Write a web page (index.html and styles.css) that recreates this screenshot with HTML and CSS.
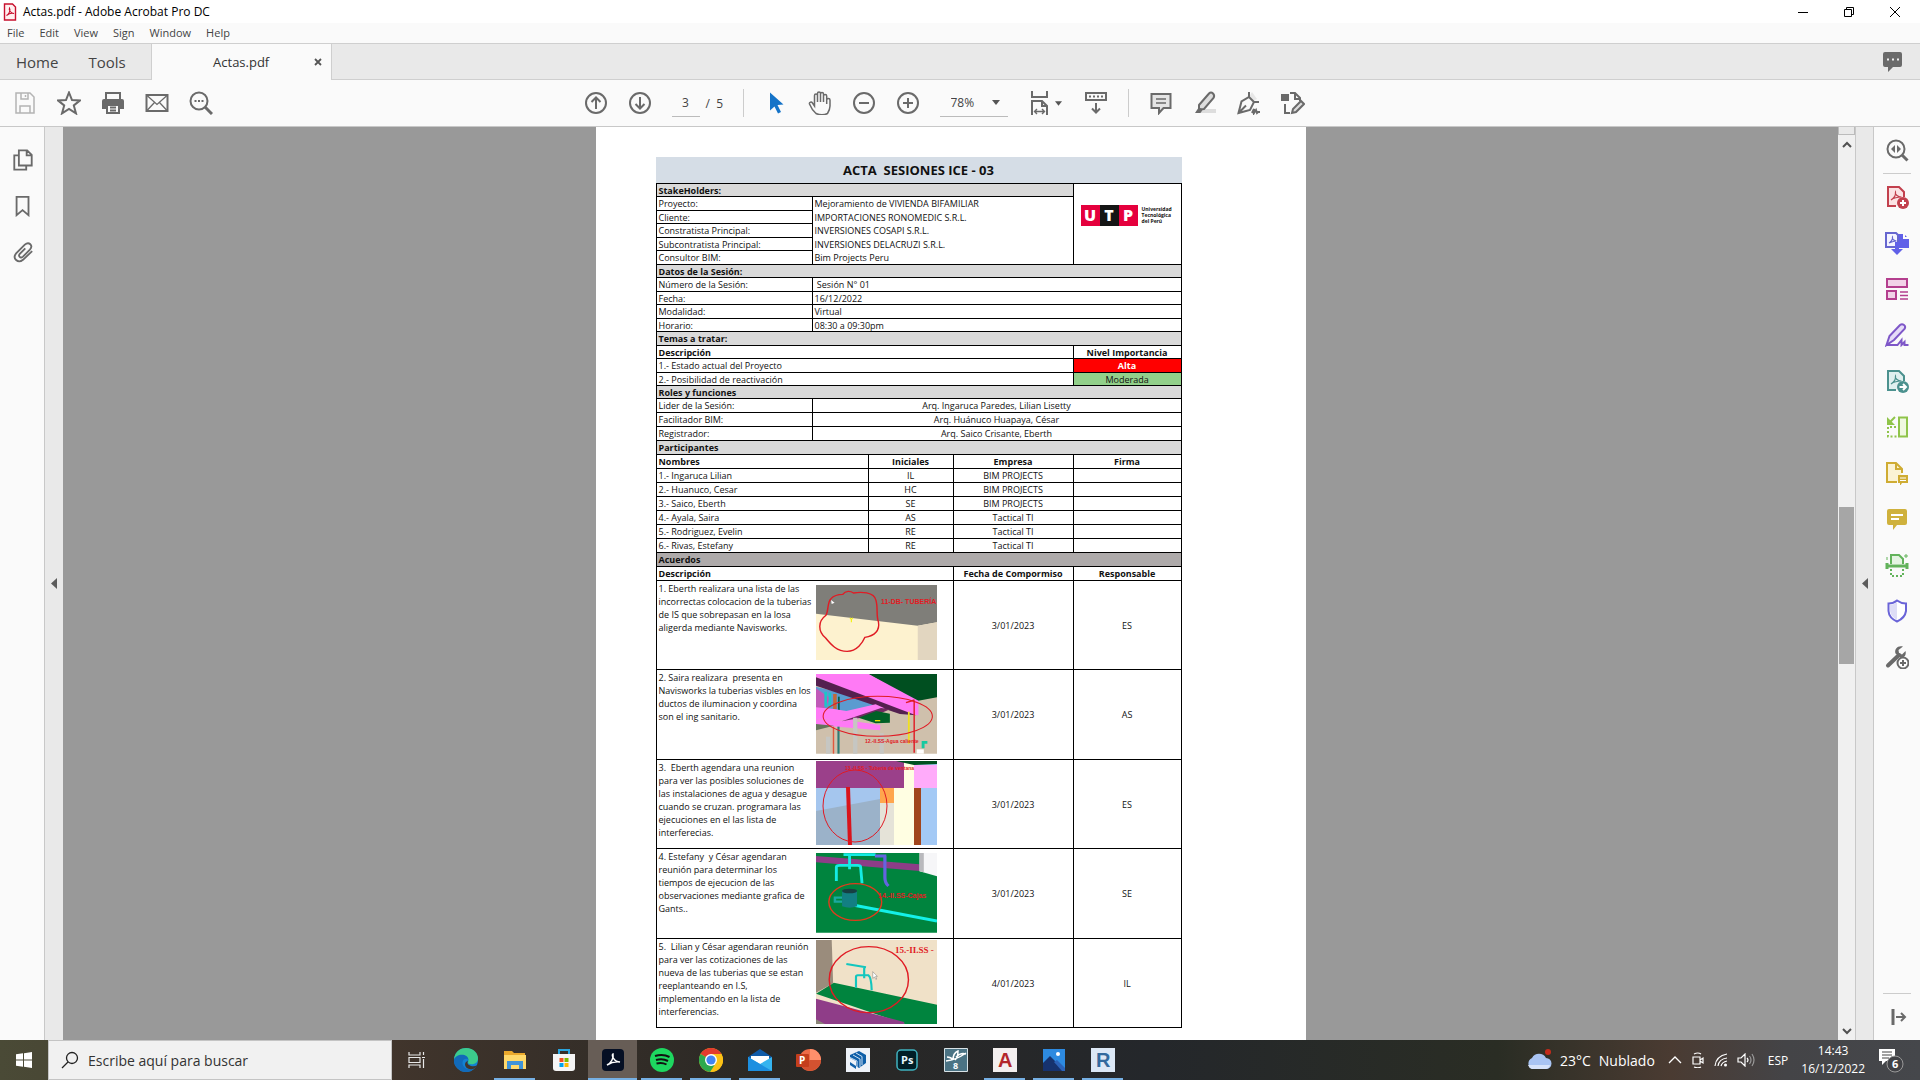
FILE: index.html
```html
<!DOCTYPE html>
<html lang="es">
<head>
    <meta charset="UTF-8">
    <meta name="viewport" content="width=device-width, initial-scale=1.0">
    <title>Actas.pdf - Adobe Acrobat Pro DC</title>
    <link rel="stylesheet" href="styles.css">
</head>
<body>
    <header class="titlebar">
        <svg class="app-icon" width="14" height="18" viewBox="0 0 14 18"><path d="M1.500 1h8l3 3v13h-11z" fill="#fff0f0" stroke="#c8102e" stroke-width="1.400"/><path d="M3.500 12.500c2-.8 4.500-5 3-7.500-1 2 1.500 5.500 4.500 5.500-2-.8-5.500.4-7.500 2z" fill="none" stroke="#c8102e" stroke-width="1.100"/></svg>
        <span class="window-title">Actas.pdf - Adobe Acrobat Pro DC</span>
        <div class="window-buttons">
            <button aria-label="Minimize"><svg width="12" height="12" viewBox="0 0 12 12"><path d="M1 6.500h10" stroke="#000"/></svg></button>
            <button aria-label="Restore"><svg width="12" height="12" viewBox="0 0 12 12"><path d="M1.500 3.500h7v7h-7zM3.500 3.500v-2h7v7h-2" fill="none" stroke="#000"/></svg></button>
            <button aria-label="Close"><svg width="12" height="12" viewBox="0 0 12 12"><path d="M1 1l10 10M11 1L1 11" stroke="#000"/></svg></button>
        </div>
    </header>

    <nav class="menubar">
        <button>File</button>
        <button>Edit</button>
        <button>View</button>
        <button>Sign</button>
        <button>Window</button>
        <button>Help</button>
    </nav>

    <div class="tabs">
        <button class="tab-link">Home</button>
        <button class="tab-link">Tools</button>
        <div class="tab">
            <span>Actas.pdf</span>
            <button class="tab-close" aria-label="Close tab"><svg width="8" height="8" viewBox="0 0 8 8"><path d="M1 1l6 6M7 1L1 7" stroke="#555" stroke-width="1.800"/></svg></button>
        </div>
        <button class="chat" aria-label="Notifications"><svg width="22" height="22" viewBox="0 0 22 22"><path d="M3 1h15q2 0 2 2v11q0 2-2 2h-7l-5 5v-5H3q-2 0-2-2V3q0-2 2-2z" fill="#6a6a6a"/><path d="M5 8.500h2M10 8.500h2M15 8.500h2" stroke="#eee" stroke-width="2"/></svg></button>
    </div>

    <div class="toolbar">
        <div class="tools-left">
            <button aria-label="Save"><svg class="icon faded" viewBox="0 0 24 24"><path d="M3 2h14l4 4v16H3zM8 2v6h7V2M7 22v-7h10v7"/><path d="M12.500 4v2"/></svg></button>
            <button aria-label="Star"><svg class="icon" viewBox="0 0 24 24"><path d="M12 1.500l3 7.500 8 .4-6.200 5 2.200 8-7-4.500-7 4.500 2.200-8L1 9.400 9 9z"/></svg></button>
            <button aria-label="Print"><svg class="icon" viewBox="0 0 24 24"><path d="M5 8V2h14v6"/><path d="M3 8h18q2 0 2 2v8h-4v-4H5v4H1v-8q0-2 2-2z" fill="#6a6a6a" stroke="none"/><path d="M6 14h12v8H6zM9 16.500h6M9 19.500h6"/></svg></button>
            <button aria-label="Mail"><svg class="icon" viewBox="0 0 24 24"><path d="M1.500 4h21v16h-21z"/><path d="M2 4.500l10 9 10-9M2 19.500l7.500-8M22 19.500l-7.500-8" stroke-width="1.300"/></svg></button>
            <button aria-label="Find"><svg class="icon" viewBox="0 0 24 24"><circle cx="10" cy="10" r="8.500"/><path d="M16 16l7 7" stroke-width="3"/><path d="M5.500 10h2M9 10h2M12.500 10h2"/></svg></button>
        </div>
        <div class="tools-center">
            <button aria-label="Previous page"><svg class="icon" viewBox="0 0 24 24"><circle cx="12" cy="12" r="10"/><path d="M12 18V7M7.500 11L12 6.500l4.500 4.500"/></svg></button>
            <button aria-label="Next page"><svg class="icon" viewBox="0 0 24 24"><circle cx="12" cy="12" r="10"/><path d="M12 6v11M7.500 13l4.500 4.500 4.500-4.500"/></svg></button>
            <div class="page-nav"><input type="text" value="3" aria-label="Page"><span>/&nbsp; 5</span></div>
            <i class="divider"></i>
            <button aria-label="Select"><svg class="icon" viewBox="0 0 24 24"><path d="M6 1.500v18l4.500-4 3.500 7 3-1.500-3.500-7 6-.5z" fill="#1473c8" stroke="none"/></svg></button>
            <button aria-label="Hand"><svg class="icon thin" viewBox="0 0 24 24"><path d="M8 22.500C4 19 2.500 15.500 1.500 13c-.5-2 2-2.500 3-1l2 3V4.500c0-2 3-2 3 0V11 2.500c0-2 3-2 3 0V11 3c0-2 3-2 3 0v8-6c0-2 3.200-2 3.200 0v-0 8-4c0-2 3.300-2 3.300 0v6c0 3-1 5-2.500 7.500-3 1.500-8 1.500-11.500 0z"/></svg></button>
            <button aria-label="Zoom out"><svg class="icon" viewBox="0 0 24 24"><circle cx="12" cy="12" r="10"/><path d="M7 12h10"/></svg></button>
            <button aria-label="Zoom in"><svg class="icon" viewBox="0 0 24 24"><circle cx="12" cy="12" r="10"/><path d="M7 12h10M12 7v10"/></svg></button>
            <div class="zoom-box"><select aria-label="Zoom"><option>78%</option></select><svg width="8" height="5" viewBox="0 0 8 5"><path d="M0 0h8L4 5z" fill="#555"/></svg></div>
            <button class="with-caret" aria-label="Fit width"><svg class="icon" viewBox="0 0 24 24"><path d="M4 0v6h15V0M4 24V10h10l5 5v9M14 10v5h5"/><path d="M7 20.500h9M9 18l-2.500 2.500L9 23M14 18l2.500 2.500L14 23" stroke-width="1.400"/></svg><svg width="7" height="5" viewBox="0 0 8 5"><path d="M0 0h8L4 5z" fill="#555"/></svg></button>
            <button aria-label="Scroll mode"><svg class="icon" viewBox="0 0 24 24"><path d="M2 2h20v7H2z"/><path d="M5 5.500h14" stroke-dasharray="2 2"/><path d="M12 12v9M8 17.500l4 4 4-4"/></svg></button>
            <i class="divider"></i>
            <button aria-label="Comment"><svg class="icon" viewBox="0 0 24 24"><path d="M2.500 3h19v14h-7L10 22v-5H2.500z" fill="#e4e4e4"/><path d="M7 8h10M7 12h10" stroke-width="1.400"/></svg></button>
            <button aria-label="Highlight"><svg class="icon" viewBox="0 0 24 24"><path d="M8 18h15v4H8z" fill="#ddd" stroke="none"/><path d="M6 14L16 2.500q2-2 4 0t.5 4.500L11 18l-5 .5z" fill="#ddd"/><path d="M6 16l3.500 3-2 3H2z" fill="#6a6a6a" stroke="none"/></svg></button>
            <button aria-label="Sign"><svg class="icon" viewBox="0 0 24 24"><path d="M12 6l3-5 5 7-4 2z" fill="#e7e7e7" stroke="none"/><path d="M1.500 22l3-11.500L12 6l5 5-4 8zM1.500 22L9 14.500M12 1v5M17 11h5"/><path d="M15 22l2-4v4l2-3 1 3 1-1h2"/></svg></button>
            <button aria-label="Edit"><svg class="icon" viewBox="0 0 24 24"><path d="M4 13v9h5M9 2h5l5 5v3M14 2v6h5"/><path d="M0 3h8v7H0z" fill="#6a6a6a" stroke="none"/><path d="M11 22l1-4 8-8 3 3-8 8z" fill="#ddd"/></svg></button>
        </div>
    </div>

    <main class="workspace">
        <aside class="side-left">
            <button aria-label="Pages"><svg class="icon" viewBox="0 0 24 24"><path d="M7.500 1.500h9l5 5V18h-14zM16 2v5h5M7 7H2.500v15.500h13V19"/></svg></button>
            <button aria-label="Bookmarks"><svg class="icon" viewBox="0 0 24 24"><path d="M5 2h13v20l-6.500-5.500L5 22z"/></svg></button>
            <button aria-label="Attachments"><svg class="icon" viewBox="0 0 24 24"><path d="M22 11L12 20.500c-5.500 4.500-12-1.500-7.500-7L14 4c4.500-4 9.500 1 5.500 5.500L12 17c-3 2.500-5.500-.5-3.500-3l6-6"/></svg></button>
        </aside>
        <button class="strip strip-left" aria-label="Open panel"><svg width="6" height="11" viewBox="0 0 6 11"><path d="M6 0v11L0 5.500z" fill="#5c5c5c"/></svg></button>

        <section class="viewer">
            <article class="page">
                <table class="acta">
                    <caption>ACTA&nbsp; SESIONES ICE - 03</caption>
                    <colgroup>
                        <col class="c-label"><col class="c-gap"><col class="c-initials"><col class="c-company"><col class="c-sign">
                    </colgroup>
                    <tbody class="info">
                        <tr>
                            <th class="section" colspan="4">StakeHolders:</th>
                            <td class="logo-cell" rowspan="6">
                                <div class="utp"><b>U</b><b class="dark">T</b><b>P</b><span>Universidad<br>Tecnológica<br>del Perú</span></div>
                            </td>
                        </tr>
                        <tr><td>Proyecto:</td><td class="open" colspan="3">Mejoramiento de VIVIENDA BIFAMILIAR</td></tr>
                        <tr><td>Cliente:</td><td class="open" colspan="3">IMPORTACIONES RONOMEDIC S.R.L.</td></tr>
                        <tr><td>Constratista Principal:</td><td class="open" colspan="3">INVERSIONES COSAPI S.R.L.</td></tr>
                        <tr><td>Subcontratista Principal:</td><td class="open" colspan="3">INVERSIONES DELACRUZI S.R.L.</td></tr>
                        <tr><td>Consultor BIM:</td><td class="open" colspan="3">Bim Projects Peru</td></tr>
                        <tr><th class="section" colspan="5">Datos de la Sesión:</th></tr>
                        <tr><td>Número de la Sesión:</td><td colspan="4">&nbsp;Sesión N° 01</td></tr>
                        <tr><td>Fecha:</td><td colspan="4">16/12/2022</td></tr>
                        <tr><td>Modalidad:</td><td colspan="4">Virtual</td></tr>
                        <tr><td>Horario:</td><td colspan="4">08:30 a 09:30pm</td></tr>
                        <tr><th class="section" colspan="5">Temas a tratar:</th></tr>
                        <tr><th colspan="4">Descripción</th><th class="mid">Nivel Importancia</th></tr>
                        <tr><td colspan="4">1.- Estado actual del Proyecto</td><td class="mid high">Alta</td></tr>
                        <tr><td colspan="4">2.- Posibilidad de reactivación</td><td class="mid moderate">Moderada</td></tr>
                    </tbody>
                    <tbody class="people">
                        <tr><th class="section" colspan="5">Roles y funciones</th></tr>
                        <tr><td>Lider de la Sesión:</td><td class="mid" colspan="4">Arq. Ingaruca Paredes, Lilian Lisetty</td></tr>
                        <tr><td>Facilitador BIM:</td><td class="mid" colspan="4">Arq. Huánuco Huapaya, César</td></tr>
                        <tr><td>Registrador:</td><td class="mid" colspan="4">Arq. Saico Crisante, Eberth</td></tr>
                        <tr><th class="section" colspan="5">Participantes</th></tr>
                        <tr><th colspan="2">Nombres</th><th class="mid">Iniciales</th><th class="mid">Empresa</th><th class="mid">Firma</th></tr>
                        <tr><td colspan="2">1.- Ingaruca Lilian</td><td class="mid">IL</td><td class="mid">BIM PROJECTS</td><td></td></tr>
                        <tr><td colspan="2">2.- Huanuco, Cesar</td><td class="mid">HC</td><td class="mid">BIM PROJECTS</td><td></td></tr>
                        <tr><td colspan="2">3.- Saico, Eberth</td><td class="mid">SE</td><td class="mid">BIM PROJECTS</td><td></td></tr>
                        <tr><td colspan="2">4.- Ayala, Saira</td><td class="mid">AS</td><td class="mid">Tactical TI</td><td></td></tr>
                        <tr><td colspan="2">5.- Rodriguez, Evelin</td><td class="mid">RE</td><td class="mid">Tactical TI</td><td></td></tr>
                        <tr><td colspan="2">6.- Rivas, Estefany</td><td class="mid">RE</td><td class="mid">Tactical TI</td><td></td></tr>
                        <tr><th class="section dark-section" colspan="5">Acuerdos</th></tr>
                        <tr><th colspan="3">Descripción</th><th class="mid">Fecha de Compormiso</th><th class="mid">Responsable</th></tr>
                    </tbody>
                    <tbody class="agreements">
                        <tr>
                            <td colspan="3"><div class="agreement">
                                <p>1. Eberth realizara una lista de las<br>incorrectas colocacion de la tuberias<br>de IS que sobrepasan en la losa<br>aligerda mediante Navisworks.</p>
                                <svg width="121" height="75" viewBox="0 0 121 75">
                                    <g transform="scale(.357 .3333) translate(-493 -45)">
                                        <path d="M493 45h339v225H493z" fill="#fdf2cf"/>
                                        <path d="M493 45h339v112l-54 10-285-36z" fill="#7f7e79"/>
                                        <path d="M778 167l54-10v113h-54z" fill="#e2d6c0"/>
                                        <path d="M568 73c8-12 22-10 30-4 20-4 58-4 63 22 6 22 0 45 7 65 4 25-10 42-38 46-6 15-22 42-50 42s-45-20-60-40c-22-20-22-50 1-68 8-15 3-40 14-50 10-12 20-13 33-13z" fill="none" stroke="#e01b24" stroke-width="4"/>
                                        <path d="M588 143l4 6 4-6M592 148v9" fill="none" stroke="#f2f200" stroke-width="3"/>
                                        <path d="M535 90l10 8-8 4z" fill="#fff"/>
                                    </g>
                                    <text class="note" x="65" y="19" font-size="7">11-DB- TUBERÍA</text>
                                </svg>
                            </div></td>
                            <td class="mid">3/01/2023</td><td class="mid">ES</td>
                        </tr>
                        <tr>
                            <td colspan="3"><div class="agreement">
                                <p>2. Saira realizara&nbsp; presenta en<br>Navisworks la tuberias visbles en los<br>ductos de iluminacion y coordina<br>son el ing sanitario.</p>
                                <svg width="121" height="80" viewBox="0 0 121 80">
                                    <g transform="scale(.357 .3333) translate(-493 -312)">
                                        <path d="M493 312h339v239H493z" fill="#cfc0ac"/>
                                        <path d="M640 312h192v70l-60 12z" fill="#004f20"/>
                                        <path d="M493 350l190 50-90 45-100-10z" fill="#5b9bd0"/>
                                        <path d="M493 355l40 30-20 35h-20z" fill="#c05ab8"/>
                                        <path d="M520 365v45M532 368v45" stroke="#18c8c8" stroke-width="7"/>
                                        <path d="M546 372v45" stroke="#c2683a" stroke-width="10"/>
                                        <path d="M557 380v40" stroke="#075e4d" stroke-width="5"/>
                                        <path d="M493 312h147l140 80v44l-30-4-257-110z" fill="#ff7af5"/>
                                        <path d="M493 322l280 114-45-4-235-85z" fill="#54204f"/>
                                        <path d="M493 412l50 5 35 6 82-20 25 12-90 38-102-5z" fill="#ff7af5"/>
                                        <path d="M493 448l100 5 80 12v16l-180-16z" fill="#ff7af5"/>
                                        <path d="M565 454l110-40 25 4-35 16z" fill="#6e2a60"/>
                                        <path d="M612 443l50-20 38 8v27l-40 2z" fill="#006026"/>
                                        <path d="M493 462l50 5-50 14z" fill="#65745b"/>
                                        <path d="M603 443v108M527 500v51M677 490v61" stroke="#c6c6c2" stroke-width="12"/>
                                        <path d="M542 470v81" stroke="#e1583e" stroke-width="4"/>
                                        <path d="M556 470v81" stroke="#2c7b75" stroke-width="6"/>
                                        <path d="M753 425v96" stroke="#f0df20" stroke-width="5"/>
                                        <path d="M768 392v156" stroke="#e01b24" stroke-width="4"/>
                                        <path d="M658 452h15" stroke="#e8e800" stroke-width="4"/>
                                        <path d="M793 535v-18h12" fill="none" stroke="#16c9a0" stroke-width="8"/>
                                        <path d="M775 538h20v13h-20z" fill="#fff"/>
                                        <ellipse cx="666" cy="439" rx="153" ry="60" fill="none" stroke="#e01b24" stroke-width="3"/>
                                        <path d="M745 398l24-8" stroke="#e01b24" stroke-width="4"/>
                                    </g>
                                    <text class="note" x="49" y="69" font-size="5">12.-II.SS-Agua caliente</text>
                                </svg>
                            </div></td>
                            <td class="mid">3/01/2023</td><td class="mid">AS</td>
                        </tr>
                        <tr>
                            <td colspan="3"><div class="agreement tight">
                                <p>3.&nbsp; Eberth agendara una reunion<br>para ver las posibles soluciones de<br>las instalaciones de agua y desague<br>cuando se cruzan. programara las<br>ejecuciones en el las lista de<br>interferecias.</p>
                                <svg width="121" height="84" viewBox="0 0 121 84">
                                    <path d="M0 0h121v84H0z" fill="#a3c9f5"/>
                                    <path d="M0 25h64v59H0z" fill="#a5c6ee"/>
                                    <path d="M0 50l64-12v46H0z" fill="#9bb2c9"/>
                                    <path d="M64 27h14v57H64z" fill="#e5e3d8"/>
                                    <path d="M64 27h14v15H64z" fill="#ffa64d"/>
                                    <path d="M78 0h20v84H78z" fill="#fffee2"/>
                                    <path d="M98 4h23v23H98z" fill="#ffabfa"/>
                                    <path d="M98 27h7v57h-7z" fill="#a1451c"/>
                                    <path d="M0 0h88v27H0z" fill="#9b408a"/>
                                    <path d="M80 0h41v3l-23 1z" fill="#004f20"/>
                                    <path d="M32 26l2 58" stroke="#d9141c" stroke-width="4"/>
                                    <ellipse cx="39" cy="45" rx="32" ry="36" fill="none" stroke="#e01b24"/>
                                    <text class="note" x="29" y="9" font-size="5">13.-II.SS - Tuberia de ventana</text>
                                </svg>
                            </div></td>
                            <td class="mid">3/01/2023</td><td class="mid">ES</td>
                        </tr>
                        <tr>
                            <td colspan="3"><div class="agreement">
                                <p>4. Estefany&nbsp; y César agendaran<br>reunión para determinar los<br>tiempos de ejecucion de las<br>observaciones mediante grafica de<br>Gants..</p>
                                <svg width="121" height="80" viewBox="0 0 121 80">
                                    <g transform="scale(.357 .3333) translate(-493 -156)">
                                        <path d="M493 156h339v239H493z" fill="#00843e"/>
                                        <path d="M493 165l290 25v20l-290-26z" fill="#8d3d87"/>
                                        <path d="M783 156h49v70l-49-15z" fill="#f6f6f8"/>
                                        <path d="M783 156h12v58l-12-3z" fill="#b9b9bd"/>
                                        <path d="M550 240v-42q0-5 10-5h50q8 0 8 6l4 48M587 205v-42M570 161h90" fill="none" stroke="#14ece4" stroke-width="8"/>
                                        <path d="M658 165h32M686 165v65q0 15 10 25" fill="none" stroke="#6464e0" stroke-width="9"/>
                                        <path d="M600 313l232 47" fill="none" stroke="#14f0e8" stroke-width="9"/>
                                        <path d="M566 290h-20v12h20" fill="none" stroke="#1ba8a0" stroke-width="7"/>
                                        <path d="M566 270h42v46q-20 8-42 0z" fill="#137f83"/>
                                        <ellipse cx="587" cy="270" rx="21" ry="7" fill="#173f42"/>
                                        <ellipse cx="603" cy="303" rx="74" ry="55" fill="none" stroke="#e23b1c" stroke-width="4"/>
                                    </g>
                                    <text class="note" x="62" y="45" font-size="7">14.-II.SS-Cajas</text>
                                </svg>
                            </div></td>
                            <td class="mid">3/01/2023</td><td class="mid">SE</td>
                        </tr>
                        <tr>
                            <td colspan="3"><div class="agreement tight">
                                <p>5.&nbsp; Lilian y César agendaran reunión<br>para ver las cotizaciones de las<br>nueva de las tuberias que se estan<br>reeplanteando en I.S,<br>implementando en la lista de<br>interferencias.</p>
                                <svg width="121" height="84" viewBox="0 0 121 84">
                                    <g transform="scale(.357 .3333) translate(-493 -417)">
                                        <path d="M493 417h339v252H493z" fill="#f0e1c8"/>
                                        <path d="M493 417h44l4 130-48 28z" fill="#9a8c7c"/>
                                        <path d="M493 578l50-33 289 66v58h-90z" fill="#00843e"/>
                                        <path d="M493 593l247 70v6H493z" fill="#8f3d88"/>
                                        <path d="M493 655l25 14h-25z" fill="#8a8578"/>
                                        <path d="M578 489l55 10M628 500v32M605 560v-32q0-5 5-5h30q8 5 9 45" fill="none" stroke="#12c6be" stroke-width="6"/>
                                        <path d="M652 512v20l5-4 4 8 2-2-3-8h5z" fill="#fff" stroke="#444"/>
                                        <ellipse cx="641" cy="536" rx="111" ry="99" fill="none" stroke="#e01b24" stroke-width="4"/>
                                    </g>
                                    <text class="note serif" x="79" y="13" font-size="9">15.-II.SS -</text>
                                </svg>
                            </div></td>
                            <td class="mid">4/01/2023</td><td class="mid">IL</td>
                        </tr>
                    </tbody>
                </table>
            </article>
        </section>

        <div class="scrollbar">
            <span class="split"></span>
            <svg width="10" height="7" viewBox="0 0 10 7"><path d="M1 6l4-4 4 4" fill="none" stroke="#505050" stroke-width="2"/></svg>
            <div class="track"><span class="thumb"></span></div>
            <svg width="10" height="7" viewBox="0 0 10 7"><path d="M1 1l4 4 4-4" fill="none" stroke="#505050" stroke-width="2"/></svg>
        </div>
        <button class="strip strip-right" aria-label="Close panel"><svg width="6" height="11" viewBox="0 0 6 11"><path d="M6 0v11L0 5.500z" fill="#5c5c5c"/></svg></button>
        <aside class="side-right">
            <button aria-label="Search tools"><svg class="icon" viewBox="0 0 24 24"><circle cx="11" cy="11" r="8.500"/><path d="M17 17l5.500 5.500" stroke-width="3"/><path d="M10 7v8l-4-4zM12 7v8l4-4z" fill="#6a6a6a" stroke="none"/></svg></button>
            <hr>
            <button aria-label="Create PDF"><svg class="icon" viewBox="0 0 24 24"><g stroke="#c2404d"><path d="M11 21H3V2h11l5 5v5" fill="#fbe3e4"/><path d="M6 15c3-2 5-5 4.500-8-1 2 2 5 6 5-4 0-7 .5-10.500 3z" stroke-width="1.200"/></g><circle cx="18" cy="18" r="6" fill="#c2404d" stroke="none"/><path d="M15 18h6M18 15v6" stroke="#fff"/></svg></button>
            <button aria-label="Combine Files"><svg class="icon" viewBox="0 0 24 24"><path d="M11 3h8l5 5v9H12z" fill="#6060e8" stroke="none"/><path d="M19 1v6h5" stroke="#fbfbfb"/><path d="M12 16H1V2h10l2 2v9" stroke="#6666cf" fill="#f4f4ff"/><path d="M4 12c2-1 4-4 3.500-6-1 2 2 4 4 4-2 0-4 .5-7.500 2z" stroke="#6666cf" stroke-width="1.200"/><path d="M12 11v8" stroke="#6060e8" stroke-width="4"/><path d="M6 18h12l-6 6z" fill="#6060e8" stroke="none"/></svg></button>
            <button aria-label="Organize Pages"><svg class="icon" viewBox="0 0 24 24"><g stroke="#b43f8e"><path d="M2 2h20v8H2zM2 14h9v8H2z" fill="#f2d3e8"/><path d="M15 15h8M15 18.500h8M15 22h8" stroke-width="1.300"/></g></svg></button>
            <button aria-label="Fill and Sign"><svg class="icon" viewBox="0 0 24 24"><g stroke="#7e57c8"><path d="M1.500 22l3-9L15 2q2-1.500 4 0t.5 4L9 17z" fill="#e6dcf8"/><path d="M1.500 22h11l4-5v5l3-3v3h4"/></g></svg></button>
            <button aria-label="Export PDF"><svg class="icon" viewBox="0 0 24 24"><g stroke="#4b918e"><path d="M11 21H3V2h11l5 5v5" fill="#dff0ef"/><path d="M6 15c3-2 5-5 4.500-8-1 2 2 5 6 5-4 0-7 .5-10.500 3z" stroke-width="1.200"/></g><circle cx="18" cy="18" r="6" fill="#4b918e" stroke="none"/><path d="M14.500 18h6M18 15l3 3-3 3" stroke="#fff"/></svg></button>
            <button aria-label="Crop pages"><svg class="icon" viewBox="0 0 24 24"><g stroke="#8fc44a"><path d="M14 2.500h8v19h-8z" fill="#eff8e0"/><path d="M11 12H3v9.500h9" stroke-dasharray="2 2"/><path d="M10 2L5 7"/></g><path d="M2 2v8h8z" fill="#8fc44a" stroke="none"/></svg></button>
            <button aria-label="Send for Comments"><svg class="icon" viewBox="0 0 24 24"><g stroke="#cfac33"><path d="M12 21H2V2h9l6 6v4" fill="#fbf3d4"/><path d="M11 2v6h6"/></g><path d="M13 14h10v8h-6l-2 3v-3h-2z" fill="#cfac33" stroke="none"/><path d="M15 17h6M15 19.500h6" stroke="#fff" stroke-width="1"/></svg></button>
            <button aria-label="Comment"><svg class="icon" viewBox="0 0 24 24"><path d="M4 2h16q2 0 2 2v12q0 2-2 2h-8l-4 5v-5H4q-2 0-2-2V4q0-2 2-2z" fill="#cfb13c" stroke="none"/><path d="M6 8h12M6 12h8" stroke="#fff"/></svg></button>
            <button aria-label="Scan"><svg class="icon" viewBox="0 0 24 24"><g stroke="#62b35b"><path d="M6 11V2h8l4 4v5" fill="#e4f4e2"/><path d="M6 16v7h12v-7" stroke-dasharray="2 2"/><path d="M2 10v6M22 10v6M1 13h22" stroke-width="3"/><path d="M21 1v4M19 3h4M2 4v3" stroke-width="1"/></g></svg></button>
            <button aria-label="Protect"><svg class="icon" viewBox="0 0 24 24"><path d="M12 1.500q4 3 9 3V12q-1 7-9 10.500Q4 19 3.500 12V4.500q5 0 8.500-3z" fill="#fff" stroke="#6a64d8"/><path d="M12 3v18q-6-3-7-9V6q4 0 7-3z" fill="#deddf6" stroke="none"/></svg></button>
            <button aria-label="More Tools"><svg class="icon" viewBox="0 0 24 24"><path d="M3 20.500L14 10" stroke-width="4" stroke-linecap="round"/><path d="M18 1.500c-5-1.500-9 2.500-7.500 7l5 4.500c4 0 6-3 5-7l-3.500 3.500-3-1.500-.5-3z" fill="#6a6a6a" stroke="none"/><circle cx="18" cy="18" r="5.500" fill="#fff"/><path d="M15 18h6M18 15v6"/></svg></button>
            <hr class="last">
            <button aria-label="Collapse"><svg class="icon" viewBox="0 0 24 24"><path d="M8 4v16" stroke-width="3"/><path d="M11 12h9M16 8l4 4-4 4"/></svg></button>
        </aside>
    </main>

    <footer class="taskbar">
        <button class="start" aria-label="Inicio"><svg width="16" height="16" viewBox="0 0 16 16"><path d="M0 2.300l7-1v6.200H0zM8 1.200L16 0v7.500H8zM0 8.500h7v6.200l-7-1zM8 8.500h8V16l-8-1.200z" fill="#fff"/></svg></button>
        <label class="search">
            <svg width="18" height="18" viewBox="0 0 18 18"><circle cx="11" cy="7" r="5.500" fill="none" stroke="#222" stroke-width="1.300"/><path d="M7 11l-6 6" stroke="#222" stroke-width="1.300"/></svg>
            <input type="text" placeholder="Escribe aquí para buscar">
        </label>
        <div class="apps">
            <button aria-label="Vista de tareas"><svg width="18" height="18" viewBox="0 0 18 18"><path d="M1 1v3h11V1M1 17v-3h11v3M1 6.500h11v5H1zM15.500 1v3M15.500 8v9M14 6.500h3" fill="none" stroke="#e8e8e8" stroke-width="1.200"/></svg></button>
            <button aria-label="Edge"><svg width="24" height="24" viewBox="0 0 24 24"><circle cx="12" cy="12" r="12" fill="#1381d2"/><path d="M0 11C1 3 7 0 12 0c8 0 12 6 12 10 0 5-4 7-8 6-3-.5-1.500-2-1.500-4C14 7 6 5 0 11z" fill="#3ccb8c"/><path d="M0 12C2 5 14 5 14.500 12c-1-2-6-2-6 3 0 5 6 8 12 5-4 5-12 5-16 1-3-2-5-5-4.500-9z" fill="#126ab9"/><path d="M14 12.500q-2 4 3 5.500 4 1 6-1-1 3-4 4-8 1-8-5 0-2 3-3.500z" fill="#41352c"/></svg></button>
            <button class="on" aria-label="Explorador"><svg width="24" height="24" viewBox="0 0 24 24"><path d="M1 3h8l2 2h11v15H1z" fill="#eba92c"/><path d="M1 7h22v14H1z" fill="#ffd96b"/><path d="M4 21v-8h16v8h-4v-4H8v4z" fill="#3f93d8"/></svg></button>
            <button aria-label="Microsoft Store"><svg width="24" height="24" viewBox="0 0 24 24"><path d="M7 7V2h10v5" fill="none" stroke="#2aa4dd" stroke-width="2"/><path d="M1 6h22v14q0 3-3 3H4q-3 0-3-3z" fill="#f5f5f5"/><path d="M7.500 10h4v4h-4z" fill="#f25022"/><path d="M12.500 10h4v4h-4z" fill="#7fba00"/><path d="M7.500 15h4v4h-4z" fill="#00a4ef"/><path d="M12.500 15h4v4h-4z" fill="#ffb900"/></svg></button>
            <button class="on active" aria-label="Acrobat"><svg width="22" height="22" viewBox="0 0 22 22"><rect width="22" height="22" rx="4" fill="#050f24"/><path d="M5 16c4-2 7-7 6-11-2 1 1 8 7 8-4-.5-9 .5-13 3z" fill="none" stroke="#fff" stroke-width="1.500"/></svg></button>
            <button class="on" aria-label="Spotify"><svg width="24" height="24" viewBox="0 0 24 24"><circle cx="12" cy="12" r="12" fill="#1ed760"/><path d="M5 8q8-2.500 14.500 1M6 12q6.500-2 12 1M6.500 15.500q5.500-1.500 10 1" fill="none" stroke="#111" stroke-width="2"/></svg></button>
            <button class="on" aria-label="Chrome"><svg width="24" height="24" viewBox="0 0 24 24"><circle cx="12" cy="12" r="12" fill="#fbc116"/><path d="M12 12L1.600 6A12 12 0 0 1 22.400 6z" fill="#e33b2e"/><path d="M12 12L1.600 6A12 12 0 0 0 11 24l6-9z" fill="#2da94f"/><path d="M12 6h10.400A12 12 0 0 1 12 24l5-9z" fill="#fbc116"/><circle cx="12" cy="12" r="6" fill="#fff"/><circle cx="12" cy="12" r="4.600" fill="#4285f4"/></svg></button>
            <button class="on" aria-label="Correo"><svg width="24" height="24" viewBox="0 0 24 24"><path d="M0 9l12-8 12 8v6H0z" fill="#0f5ba8"/><path d="M3 8h18v8H3z" fill="#fff"/><path d="M0 9l12 7L24 9v14H0z" fill="#35b4ef"/><path d="M0 9l24 14H0z" fill="#1c8fe0"/></svg></button>
            <button aria-label="PowerPoint"><svg width="26" height="24" viewBox="0 0 26 24"><circle cx="14" cy="12" r="11" fill="#ed6c47"/><path d="M14 1a11 11 0 0 1 11 11H14z" fill="#ff8f6b"/><path d="M14 12h11a11 11 0 0 1-20 6z" fill="#d35230"/><rect y="6" width="13" height="13" rx="1" fill="#c43e1c"/><text x="3" y="16" font-size="10" font-weight="700" fill="#fff">P</text></svg></button>
            <button aria-label="SketchUp"><svg width="24" height="24" viewBox="0 0 24 24"><path d="M0 0h24v24H0z" fill="#eef2f8"/><path d="M13 3l7 4v8l-7 5-3-2v-5l-6-3V7z" fill="#0f5fa8"/><path d="M4 9.500l7 3.500v6M7 7l7 4v8M10 5l6 3.500V17" fill="none" stroke="#cfe2f5"/><path d="M4 14l6 4v3l-6-4z" fill="#0f5fa8"/></svg></button>
            <button aria-label="Photoshop"><svg width="22" height="22" viewBox="0 0 22 22"><rect x="1" y="1" width="20" height="20" rx="4" fill="#001e26" stroke="#3fb3c0" stroke-width="1.500"/><text x="5" y="15" font-size="11" font-weight="700" fill="#e8f8ff">Ps</text></svg></button>
            <button aria-label="Visor"><svg width="24" height="24" viewBox="0 0 24 24"><path d="M.5.5h23v23H.5z" fill="#4b7384" stroke="#d8e2e6"/><path d="M2 13q10-1 20-8M9 12Q9 5 14 3q0 6-3 9M12 9q5-5 10-3M3 9q4 0 6 3" fill="none" stroke="#fff" stroke-width="1.500"/><text x="9" y="21" font-size="9" font-weight="700" fill="#fff">8</text></svg></button>
            <button class="on" aria-label="AutoCAD"><svg width="24" height="24" viewBox="0 0 24 24"><path d="M0 0h24v24H0z" fill="#f3efef"/><text class="letter" x="5" y="19" font-size="20" fill="#b3262b">A</text></svg></button>
            <button class="on" aria-label="Fotos"><svg width="22" height="22" viewBox="0 0 22 22"><path d="M0 0h22v22H0z" fill="#2d8ae0"/><path d="M0 14l7-7 15 15H0z" fill="#16326e"/><path d="M11 13l3-2 8 8v3h-3z" fill="#2b62b8"/><circle cx="15" cy="5" r="2" fill="#fff"/></svg></button>
            <button class="on" aria-label="Revit"><svg width="24" height="24" viewBox="0 0 24 24"><path d="M0 0h24v24H0z" fill="#dce8f6"/><text class="letter" x="5" y="19" font-size="20" fill="#336a9e">R</text></svg></button>
        </div>
        <div class="tray">
            <button class="weather"><svg width="26" height="22" viewBox="0 0 26 22"><path d="M6 20a6 6 0 0 1 0-11 8 8 0 0 1 14 0 5.500 5.500 0 0 1 0 11z" fill="#a9c4f3"/><path d="M6 20a6 6 0 0 1-4-4h22a5 5 0 0 1-4 4z" fill="#d7e3fa"/><circle cx="22" cy="3" r="3" fill="#c42b1c"/></svg><span>23°C</span><span>Nublado</span></button>
            <button aria-label="Iconos ocultos"><svg width="14" height="8" viewBox="0 0 14 8"><path d="M1 7l6-6 6 6" fill="none" stroke="#fff" stroke-width="1.300"/></svg></button>
            <button aria-label="Reunirse"><svg width="14" height="16" viewBox="0 0 14 16"><path d="M2 5h7v7H2zM9 8l3-2v5l-3-2M3 2q4-2 7 0M3 15q4 1.500 7 0" fill="none" stroke="#fff" stroke-width="1.200"/></svg></button>
            <button aria-label="Red"><svg width="14" height="14" viewBox="0 0 14 14"><path d="M1 13Q2 3 13 1M4 13q1-7 9-8M7 13q1-4 6-5" fill="none" stroke="#fff" stroke-width="1.200"/><circle cx="11.500" cy="12" r="1.500" fill="#fff"/></svg></button>
            <button aria-label="Volumen"><svg width="18" height="14" viewBox="0 0 18 14"><path d="M1 5h3l4-4v12L4 9H1zM10 5q2 2 0 4" fill="none" stroke="#fff" stroke-width="1.200"/><path d="M12.500 3q3 4 0 8M15 1q4 6 0 12" fill="none" stroke="#999" stroke-width="1.200"/></svg></button>
            <button class="lang">ESP</button>
            <button class="clock">14:43<br>16/12/2022</button>
            <button class="notify" aria-label="Notificaciones"><svg width="26" height="26" viewBox="0 0 26 26"><path d="M1 2h16v12H8l-4 4v-4H1z" fill="#fff"/><path d="M4 5h10M4 8h10M4 11h7" stroke="#444" stroke-width="1"/><circle cx="17" cy="17" r="8" fill="#404145" stroke="#999"/><text x="14" y="21" font-size="11" font-weight="700" fill="#fff">6</text></svg></button>
        </div>
    </footer>
</body>
</html>
```
FILE: styles.css
```css
* {
    box-sizing: border-box;
}

body {
    margin: 0;
    height: 100vh;
    display: flex;
    flex-direction: column;
    overflow: hidden;
    background-color: #fafafa;
    color: #444;
    font-family: "Open Sans", "Noto Sans", sans-serif;
    font-size: 12px;
}

button, input, select {
    font: inherit;
    color: inherit;
    background: none;
    border: 0;
    padding: 0;
    margin: 0;
}

button {
    display: flex;
    align-items: center;
    justify-content: center;
}

svg {
    display: block;
    flex: none;
}

/* Window header */
.titlebar {
    display: flex;
    align-items: center;
    height: 23px;
    padding-left: 3px;
    background-color: #fff;
    color: #000;
}

.window-title {
    margin-left: 6px;
}

.window-buttons {
    display: flex;
    margin-left: auto;
    margin-right: 2px;
}

.window-buttons button {
    width: 46px;
    height: 20px;
}

.menubar {
    display: flex;
    gap: 15px;
    height: 20px;
    padding: 0 0 2px 7px;
    font-size: 11px;
}

.tabs {
    display: flex;
    height: 37px;
    background-color: #e9e9e9;
    border-top: 1px solid #cfcfcf;
    border-bottom: 1px solid #cfcfcf;
}

.tab-link {
    padding-left: 16px;
    font-size: 15px;
}

.tab-link + .tab-link {
    padding-left: 30px;
}

.tab {
    display: flex;
    align-items: center;
    justify-content: center;
    position: relative;
    width: 181px;
    height: 36px;
    margin-left: 25px;
    background-color: #fafafa;
    border: 1px solid #cfcfcf;
    border-width: 0 1px;
    font-size: 13px;
    color: #333;
}

.tab-close {
    position: absolute;
    right: 9px;
}

.chat {
    margin-left: auto;
    margin-right: 16px;
}

/* Toolbar */
.toolbar {
    display: grid;
    grid-template-columns: 1fr auto 1fr;
    align-items: center;
    height: 47px;
    padding-right: 32px;
    border-bottom: 1px solid #c8c8c8;
}

.tools-left,
.tools-center {
    display: flex;
    align-items: center;
}

.tools-left {
    padding-left: 3px;
}

.tools-left button,
.tools-center button {
    width: 44px;
    height: 32px;
}

.icon {
    width: 24px;
    height: 24px;
    fill: none;
    stroke: #6a6a6a;
    stroke-width: 2;
}

.thin {
    stroke-width: 1.5;
}

.faded {
    stroke: #b4b4b4;
    stroke-width: 1.5;
}

.page-nav {
    display: flex;
    align-items: center;
    gap: 6px;
    width: 71px;
    padding-left: 10px;
}

.page-nav input {
    width: 28px;
    height: 27px;
    text-align: center;
    border-bottom: 1px solid #bbb;
}

.divider {
    width: 1px;
    height: 28px;
    background-color: #ccc;
    margin: 0 10px;
}

.zoom-box {
    display: flex;
    align-items: center;
    width: 68px;
    height: 27px;
    margin: 0 8px 0 10px;
    border-bottom: 1px solid #bbb;
}

.zoom-box select {
    appearance: none;
    width: 52px;
    padding-left: 11px;
}

.tools-center .with-caret {
    gap: 3px;
    width: 58px;
}

/* Workspace */
.workspace {
    flex: 1;
    display: flex;
    min-height: 0;
}

.side-left,
.side-right {
    display: flex;
    flex-direction: column;
    align-items: center;
}

.side-left {
    width: 44px;
    padding: 10px 0 0 2px;
}

.side-left button,
.side-right button {
    width: 44px;
    height: 46px;
    flex: none;
}

.side-left .icon {
    width: 22px;
    height: 22px;
}

.strip {
    width: 19px;
    background-color: #e9e9e9;
    border-left: 1px solid #c8c8c8;
}

.strip-right {
    border-right: 1px solid #c8c8c8;
}

.viewer {
    flex: 1;
    min-width: 0;
    overflow: hidden;
    background-color: #999;
}

.page {
    width: 40%;
    min-width: 710px;
    min-height: 100%;
    margin: 0 auto;
    padding: 30px 124px 12px 60px;
    background-color: #fff;
}

.scrollbar {
    display: flex;
    flex-direction: column;
    align-items: center;
    width: 17px;
    padding-bottom: 5px;
    background-color: #f0f0f0;
}

.split {
    width: 100%;
    height: 8px;
    margin-bottom: 6px;
    background-color: #e9e9e9;
    border: 1px solid #bbb;
    border-top: 0;
}

.track {
    flex: 1;
    display: flex;
    flex-direction: column;
    padding-top: 359px;
}

.thumb {
    width: 15px;
    height: 157px;
    background-color: #a6a6a6;
}

.side-right {
    width: 46px;
}

.side-right hr {
    width: 28px;
    margin: 0;
    border: 0;
    border-top: 1px solid #ccc;
}

.side-right .last {
    margin-top: auto;
}

/* Meeting minutes */
.acta {
    width: 100%;
    table-layout: fixed;
    border-collapse: collapse;
    font-size: 9px;
    line-height: 11px;
    color: #111;
    white-space: nowrap;
}

.acta caption {
    height: 26px;
    line-height: 27px;
    background-color: #d5dde6;
    font-size: 13px;
    font-weight: 700;
}

.c-label { width: 156px; }
.c-gap { width: 56px; }
.c-initials { width: 85px; }
.c-company { width: 120px; }

.acta td,
.acta th {
    padding: 0 2px;
    border: 1px solid #000;
    text-align: left;
}

.acta .open {
    border-top: 0;
    border-bottom: 0;
}

.acta .mid {
    text-align: center;
}

.acta .section {
    background-color: #d9d9d9;
}

.acta .dark-section {
    background-color: #aeaaaa;
}

.acta .high {
    background-color: #f00;
    color: #fff;
    font-weight: 700;
}

.acta .moderate {
    background-color: #92d08a;
}

.info tr {
    height: 13px;
}

.info tr:nth-child(even) {
    height: 14px;
}

.people tr {
    height: 14px;
}

.people tr:first-child {
    height: 13px;
}

.agreements tr {
    height: 89px;
}

.agreements tr:nth-child(even) {
    height: 90px;
}

.agreement {
    display: flex;
    align-items: flex-start;
    height: 87px;
}

.agreement p {
    width: 157px;
    margin: 0;
    line-height: 13px;
}

.agreement svg {
    margin-top: 3px;
}

.agreement.tight svg {
    margin-top: 0;
}

/* red labels inside the model views */
.note {
    fill: #e01b24;
    font-family: "Liberation Sans", sans-serif;
    font-weight: 700;
}

.serif {
    font-family: "Liberation Serif", serif;
}

.utp {
    display: flex;
    align-items: center;
    padding: 0 0 18px 5px;
}

.utp b {
    width: 19px;
    height: 21px;
    background-color: #e5003d;
    color: #fff;
    font-size: 16px;
    font-weight: 900;
    line-height: 21px;
    text-align: center;
}

.utp .dark {
    background-color: #151515;
}

.utp span {
    margin-left: 4px;
    font-size: 5px;
    font-weight: 700;
    line-height: 6px;
}

/* Taskbar */
.taskbar {
    display: flex;
    height: 40px;
    background: linear-gradient(90deg, #4a4a36 0, #41352c 20%, #2a2825 40%, #24272b 60%, #2a2d24 78%, #4a3b32 87%, #444447 93%, #45474b 100%);
    color: #fff;
}

.start {
    width: 48px;
}

.search {
    display: flex;
    align-items: center;
    gap: 9px;
    width: 344px;
    padding-left: 12px;
    background-color: #f1f1f1;
    border: 1px solid #c4c4c4;
}

.search input {
    flex: 1;
    font-size: 14px;
}

.search input::placeholder {
    color: #333;
}

.apps {
    display: flex;
}

.apps button {
    width: 49px;
    position: relative;
}

.apps .on::after {
    content: "";
    position: absolute;
    left: 4px;
    right: 4px;
    bottom: 0;
    height: 2px;
    background-color: #76b0e4;
}

.apps .active {
    background-color: #675d56;
}

.apps .active::after {
    left: 0;
    right: 0;
}

.letter {
    font-family: "Liberation Sans", sans-serif;
    font-weight: 700;
}

.tray {
    display: flex;
    align-items: center;
    gap: 9px;
    margin-left: auto;
    padding-right: 16px;
}

.weather {
    gap: 8px;
    margin-right: 4px;
    font-size: 14px;
}

.lang {
    padding: 0 4px;
}

.clock {
    line-height: 18px;
    text-align: center;
}

.notify {
    margin-left: 4px;
}
```
